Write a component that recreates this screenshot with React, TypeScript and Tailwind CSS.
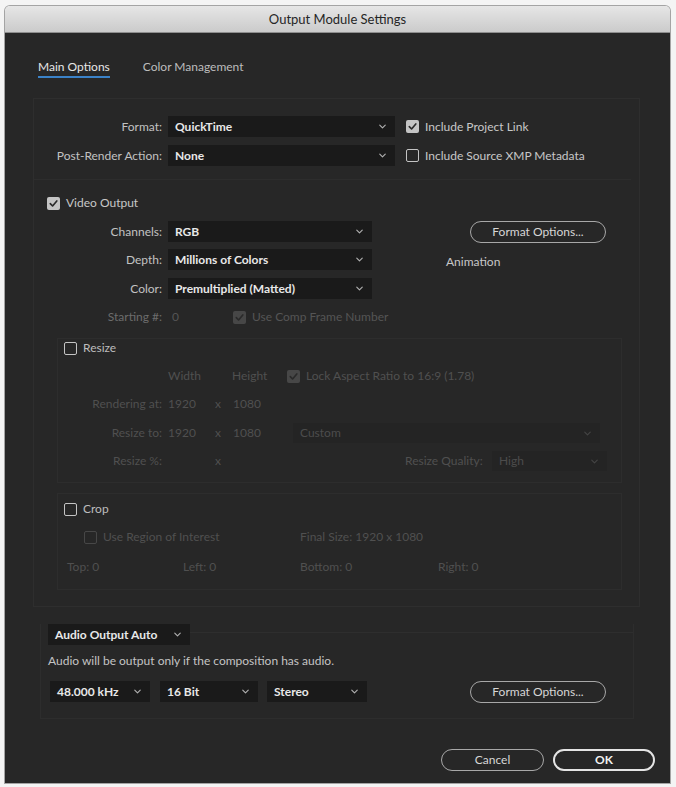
import { ChevronDown } from "lucide-react";

type CheckProps = {
  checked?: boolean;
  dim?: boolean;
  label: string;
  labelClass?: string;
};

// Small square checkbox with a label, AE style
function Check({ checked, dim, label, labelClass }: CheckProps) {
  const box = checked
    ? dim
      ? "bg-[#474747]"
      : "bg-[#c4c4c4]"
    : dim
      ? "border-[1.5px] border-[#474747]"
      : "border-[1.5px] border-[#c4c4c4]";
  return (
    <div className="flex items-center h-[14px]">
      <div className={`w-[13px] h-[13px] rounded-[2px] flex items-center justify-center ${box}`}>
        {checked && (
          <svg width="11" height="11" viewBox="0 0 12 12">
            <path
              d="M2.5 6.2 L5 8.7 L9.6 3.2"
              fill="none"
              stroke="#2a2a2a"
              strokeWidth="1.8"
              strokeLinecap="round"
              strokeLinejoin="round"
            />
          </svg>
        )}
      </div>
      <span className={`ml-[6px] whitespace-nowrap ${labelClass ?? (dim ? "text-[#5e5e5e]" : "text-[#c8c8c8]")}`}>
        {label}
      </span>
    </div>
  );
}

type SelectProps = {
  value: string;
  width: string;
  dim?: boolean;
  className?: string;
};

function Select({ value, width, dim, className }: SelectProps) {
  return (
    <div
      className={`${width} h-[21px] flex items-center justify-between pl-[7px] pr-[7px] ${
        dim ? "bg-[#242424] text-[#4c4c4c]" : "bg-[#1a1a1a] text-[#e8e8e8] font-bold"
      } ${className ?? ""}`}
    >
      <span className="whitespace-nowrap">{value}</span>
      <ChevronDown size={11} strokeWidth={2.5} className={dim ? "text-[#444444]" : "text-[#b0b0b0]"} />
    </div>
  );
}

function PillButton({ label, width, strong }: { label: string; width: string; strong?: boolean }) {
  return (
    <div
      className={`${width} h-[22px] rounded-full flex items-center justify-center ${
        strong
          ? "border-2 border-[#e4e4e4] text-[#f2f2f2] font-bold"
          : "border-[1.5px] border-[#a8a8a8] text-[#d6d6d6]"
      }`}
    >
      {label}
    </div>
  );
}

function Label({ text, className }: { text: string; className?: string }) {
  return <div className={`text-right whitespace-nowrap ${className ?? "text-[#c2c2c2]"}`}>{text}</div>;
}

export default function App() {
  return (
    <div className="w-[676px] h-[787px] bg-[#f4f4f4] pt-[6px] pl-[5px] font-['Lato','Liberation_Sans',sans-serif] text-[12px] leading-[16px]">
      <div className="w-[665px] h-[777px] flex flex-col rounded-t-[5px] overflow-hidden shadow-[0_0_0_1px_#a4a4a4]">
        {/* title bar */}
        <div className="h-[27px] shrink-0 bg-linear-to-b from-[#e6e6e6] to-[#cbcbcb] border-b border-[#8e8e8e] flex items-center justify-center text-[13px] text-[#262626]">
          Output Module Settings
        </div>

        <div className="flex-1 bg-[#272727] flex flex-col">
          {/* tabs */}
          <div className="pt-[26px] pl-[33px] flex gap-[33px]">
            <div className="pb-[1px] border-b-2 border-[#3b82c8] text-[#e6e6e6]">Main Options</div>
            <div className="text-[#bdbdbd]">Color Management</div>
          </div>

          {/* main options frame */}
          <div className="mt-[20px] ml-[28px] w-[607px] border border-[#2e2e2e] pt-[17px] pb-[16px]">
            <div className="flex items-center h-[21px]">
              <Label text="Format:" className="w-[128px] text-[#c2c2c2]" />
              <Select value="QuickTime" width="w-[227px]" className="ml-[6px]" />
              <div className="ml-[11px]">
                <Check checked label="Include Project Link" />
              </div>
            </div>
            <div className="flex items-center h-[21px] mt-[8px]">
              <Label text="Post-Render Action:" className="w-[128px] text-[#c2c2c2]" />
              <Select value="None" width="w-[227px]" className="ml-[6px]" />
              <div className="ml-[11px]">
                <Check label="Include Source XMP Metadata" />
              </div>
            </div>
            <div className="mt-[13px] mr-[8px] h-px bg-[#2d2d2d]" />

            {/* video output */}
            <div className="mt-[16px] pl-[13px]">
              <Check checked label="Video Output" />
            </div>
            <div className="flex items-center h-[21px] mt-[11px]">
              <Label text="Channels:" className="w-[128px] text-[#c2c2c2]" />
              <Select value="RGB" width="w-[204px]" className="ml-[6px]" />
              <div className="ml-[98px]">
                <PillButton label="Format Options..." width="w-[136px]" />
              </div>
            </div>
            <div className="flex items-center h-[21px] mt-[7px]">
              <Label text="Depth:" className="w-[128px] text-[#c2c2c2]" />
              <Select value="Millions of Colors" width="w-[204px]" className="ml-[6px]" />
              <div className="ml-[74px] pt-[5px] text-[#c8c8c8]">Animation</div>
            </div>
            <div className="flex items-center h-[21px] mt-[8px]">
              <Label text="Color:" className="w-[128px] text-[#c2c2c2]" />
              <Select value="Premultiplied (Matted)" width="w-[204px]" className="ml-[6px]" />
            </div>
            <div className="flex items-center h-[14px] mt-[11px]">
              <Label text="Starting #:" className="w-[128px] text-[#6c6c6c]" />
              <div className="ml-[10px] w-[61px] text-[#555555]">0</div>
              <Check checked dim label="Use Comp Frame Number" labelClass="text-[#555555]" />
            </div>

            {/* resize */}
            <div className="mt-[14px] ml-[23px] w-[565px] border border-[#2d2d2d] pt-[2px] pb-[11px] text-[#505050]">
              <div className="pl-[6px]">
                <Check label="Resize" labelClass="text-[#bdbdbd]" />
              </div>
              <div className="flex items-center h-[14px] mt-[14px]">
                <div className="w-[110px]" />
                <div className="w-[64px]">Width</div>
                <div className="w-[55px]">Height</div>
                <Check checked dim label="Lock Aspect Ratio to 16:9 (1.78)" labelClass="text-[#505050]" />
              </div>
              <div className="flex items-center h-[14px] mt-[14px]">
                <Label text="Rendering at:" className="w-[104px]" />
                <div className="ml-[6px] w-[47px]">1920</div>
                <div className="w-[18px]">x</div>
                <div>1080</div>
              </div>
              <div className="flex items-center h-[20px] mt-[12px]">
                <Label text="Resize to:" className="w-[104px]" />
                <div className="ml-[6px] w-[47px]">1920</div>
                <div className="w-[18px]">x</div>
                <div className="w-[48px]">1080</div>
                <Select value="Custom" width="w-[307px]" dim className="ml-[12px] !h-[20px]" />
              </div>
              <div className="flex items-center h-[20px] mt-[8px]">
                <Label text="Resize %:" className="w-[104px]" />
                <div className="ml-[6px] w-[47px]" />
                <div className="w-[18px]">x</div>
                <div className="w-[172px]" />
                <div className="w-[80px] whitespace-nowrap">Resize Quality:</div>
                <Select value="High" width="w-[115px]" dim className="ml-[7px] !h-[20px]" />
              </div>
            </div>

            {/* crop */}
            <div className="mt-[10px] ml-[23px] w-[565px] border border-[#2d2d2d] pt-[8px] pb-[15px] text-[#505050]">
              <div className="pl-[6px]">
                <Check label="Crop" labelClass="text-[#bdbdbd]" />
              </div>
              <div className="flex items-center h-[14px] mt-[14px] pl-[26px]">
                <div className="w-[216px]">
                  <Check dim label="Use Region of Interest" labelClass="text-[#505050]" />
                </div>
                <div>Final Size: 1920 x 1080</div>
              </div>
              <div className="flex items-center h-[14px] mt-[16px] pl-[9px]">
                <div className="w-[116px]">Top: 0</div>
                <div className="w-[117px]">Left: 0</div>
                <div className="w-[138px]">Bottom: 0</div>
                <div>Right: 0</div>
              </div>
            </div>
          </div>

          {/* audio */}
          <div className="mt-[17px] ml-[35px] w-[594px] border-x border-b border-[#2d2d2d] pb-[16px]">
            <div className="flex items-center h-[21px]">
              <Select value="Audio Output Auto" width="w-[142px]" className="ml-[7px]" />
              <div className="flex-1 h-px bg-[#2e2e2e] self-start mt-[8px]" />
            </div>
            <div className="mt-[8px] pl-[7px] text-[#c4c4c4]">
              Audio will be output only if the composition has audio.
            </div>
            <div className="flex items-center h-[21px] mt-[12px] pl-[9px]">
              <Select value="48.000 kHz" width="w-[100px]" />
              <Select value="16 Bit" width="w-[98px]" className="ml-[10px]" />
              <Select value="Stereo" width="w-[100px]" className="ml-[9px]" />
              <div className="ml-[103px]">
                <PillButton label="Format Options..." width="w-[136px]" />
              </div>
            </div>
          </div>

          {/* footer buttons */}
          <div className="mt-[30px] pr-[15px] flex justify-end gap-[9px]">
            <PillButton label="Cancel" width="w-[103px]" />
            <PillButton label="OK" width="w-[102px]" strong />
          </div>
        </div>
      </div>
    </div>
  );
}
